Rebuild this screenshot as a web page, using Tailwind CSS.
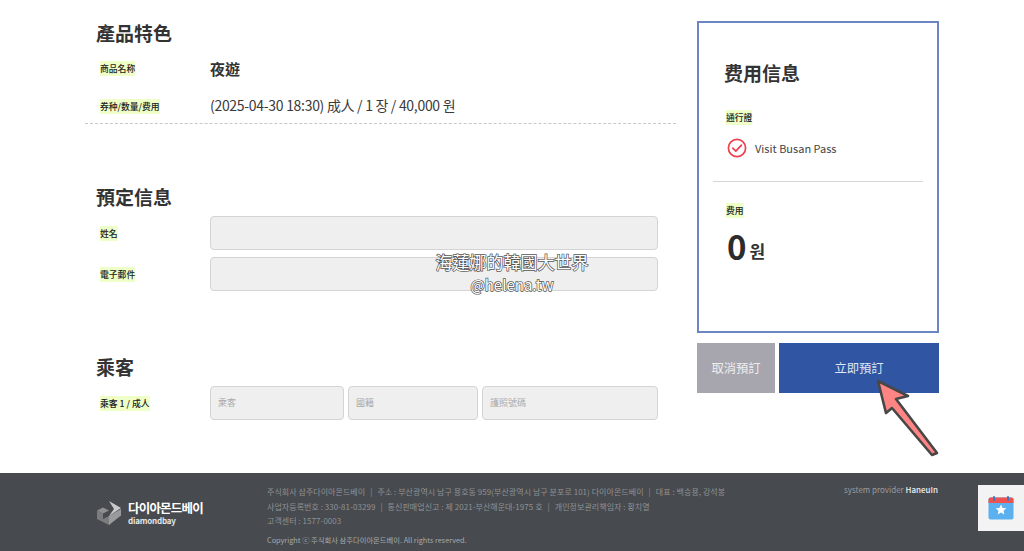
<!DOCTYPE html>
<html lang="zh-Hant">

<head>
  <meta charset="UTF-8">
  <meta name="viewport" content="width=device-width, initial-scale=1.0">
  <title>Booking</title>
  <script src="https://cdn.jsdelivr.net/npm/@tailwindcss/browser@4"></script>
</head>

<body class="relative w-[1024px] h-[551px] overflow-hidden bg-white text-[#333] font-['Noto_Sans_CJK_TC','Noto_Sans_CJK_KR',sans-serif]">
  <main class="h-[473px] flex pl-[85px] pr-[85px]">
    <!-- left column -->
    <div class="w-[591px] shrink-0 pt-[19px]">
      <section class="h-[105px] border-b border-dashed border-[#c8c8c8]">
        <h2 class="pl-[11px] text-[19px] leading-[27px] font-bold">產品特色</h2>
        <div class="flex items-center h-[28px] mt-[9px] pl-[15px]">
          <span class="w-[110px] shrink-0 -mt-[8px]"><span class="bg-[#eeffc8] text-[#222] text-[8.8px] leading-[15px] font-medium inline-block">商品名称</span></span>
          <span class="text-[15px] font-bold">夜遊</span>
        </div>
        <div class="flex items-center h-[28px] mt-[9px] pl-[15px]">
          <span class="w-[110px] shrink-0 -mt-[6px]"><span class="bg-[#eeffc8] text-[#222] text-[8.8px] leading-[15px] font-medium inline-block">券种/数量/费用</span></span>
          <span class="text-[14px] tracking-[-0.3px] text-[#3a3a3a] -mt-[1px]">(2025-04-30 18:30) 成人 / 1 장 / 40,000 원</span>
        </div>
      </section>

      <section class="mt-[59px]">
        <h2 class="pl-[11px] text-[19px] leading-[27px] font-bold">預定信息</h2>
        <div class="flex items-center mt-[6px] pl-[15px]">
          <span class="w-[110px] shrink-0 -mt-[6px]"><span class="bg-[#eeffc8] text-[#222] text-[8.8px] leading-[15px] font-medium inline-block">姓名</span></span>
          <div class="w-[448px] h-[34px] rounded-[4px] bg-[#efefef] border border-[#d4d4d4]"></div>
        </div>
        <div class="flex items-center mt-[7px] pl-[15px]">
          <span class="w-[110px] shrink-0 -mt-[6px]"><span class="bg-[#eeffc8] text-[#222] text-[8.8px] leading-[15px] font-medium inline-block">電子郵件</span></span>
          <div class="w-[448px] h-[34px] rounded-[4px] bg-[#efefef] border border-[#d4d4d4]"></div>
        </div>
      </section>

      <section class="mt-[62px]">
        <h2 class="pl-[11px] text-[19px] leading-[27px] font-bold">乘客</h2>
        <div class="flex items-center mt-[6px] pl-[15px]">
          <span class="w-[110px] shrink-0 -mt-[6px]"><span class="bg-[#eeffc8] text-[#222] text-[8.8px] leading-[15px] font-medium inline-block">乘客 1 / 成人</span></span>
          <div class="w-[448px] flex gap-[4px] text-[9px] text-[#aaa]">
            <div class="w-[134px] h-[34px] flex items-center pl-[7px] rounded-[4px] bg-[#efefef] border border-[#d4d4d4]">乘客</div>
            <div class="w-[130px] h-[34px] flex items-center pl-[7px] rounded-[4px] bg-[#efefef] border border-[#d4d4d4]">國籍</div>
            <div class="w-[176px] h-[34px] flex items-center pl-[7px] rounded-[4px] bg-[#efefef] border border-[#d4d4d4]">護照號碼</div>
          </div>
        </div>
      </section>
    </div>

    <!-- right column -->
    <aside class="w-[242px] ml-[21px] pt-[21px] shrink-0">
      <div class="h-[312px] border-2 border-[#6b86c0] px-[14px] pt-[36px]">
        <h2 class="pl-[11px] text-[19px] leading-[27px] font-bold">费用信息</h2>
        <div class="pl-[13px] mt-[16px]"><span class="bg-[#eeffc8] text-[#222] text-[8.8px] leading-[15px] font-medium inline-block">通行證</span></div>
        <div class="flex items-center gap-[8px] pl-[14px] mt-[11px] h-[22px]">
          <svg width="20" height="20" viewBox="0 0 20 20" fill="none" stroke="#ef3e4f" stroke-width="1.7" class="shrink-0">
            <circle cx="10" cy="10" r="8.6" />
            <path d="M5.8 10.2l3 3 5.6-6" stroke-linecap="round" stroke-linejoin="round" />
          </svg>
          <span class="text-[11px] text-[#444]">Visit Busan Pass</span>
        </div>
        <div class="border-t border-[#d6d6d6] mt-[22px]"></div>
        <div class="pl-[13px] mt-[13px]"><span class="bg-[#eeffc8] text-[#222] text-[8.8px] leading-[15px] font-medium inline-block">费用</span></div>
        <div class="pl-[14px] mt-[8px] flex items-baseline gap-[3px] font-bold">
          <span class="text-[33px] leading-[38px] text-[#2c2c2c]">0</span>
          <span class="text-[17px] -translate-y-[2px]">원</span>
        </div>
      </div>
      <div class="flex gap-[4px] mt-[10px] h-[50px] text-[12.3px]">
        <button class="w-[78px] bg-[#a7a5ae] text-[#eee]">取消預訂</button>
        <button class="w-[160px] bg-[#3056a3] text-[#dfe5f2]">立即預訂</button>
      </div>
    </aside>
  </main>

  <footer class="h-[78px] bg-[#474a4e] flex pl-[97px]">
    <div class="w-[170px] shrink-0 pt-[28px] flex items-start gap-[6px]">
      <svg width="25" height="24" viewBox="0 0 25 24">
        <path d="M0 9.5L6 6.5L12 9.5L6 12.5Z" fill="#8e8f90" />
        <path d="M0 9.5L6 12.5V18L12 15V24L0 18Z" fill="#7b7c7e" />
        <path d="M6 12.5L12 15L24 8V14.5L12 24V15Z" fill="#9a9b9c" />
        <path d="M12 0L24 7L12 15L17 8Z" fill="#c8c9ca" />
      </svg>
      <div class="text-white font-bold">
        <div class="text-[12.5px] leading-[14px] tracking-[-0.8px]">다이아몬드베이</div>
        <div class="text-[8px] leading-[9px] mt-[1px] tracking-[-0.2px] text-[#e6e6e6]">diamondbay</div>
      </div>
    </div>
    <div class="w-[577px] shrink-0 pt-[12px] text-[8px] leading-[14.5px] text-[#8f9194] whitespace-nowrap tracking-[0.05px]">
      <p>주식회사 삼주다이아몬드베이<span class="mx-[5px]">|</span>주소 : 부산광역시 남구 용호동 959(부산광역시 남구 분포로 101) 다이아몬드베이<span class="mx-[5px]">|</span>대표 : 백승용, 강석봉</p>
      <p>사업자등록번호 : 330-81-03299<span class="mx-[5px]">|</span>통신판매업신고 : 제 2021-부산해운대-1975 호<span class="mx-[5px]">|</span>개인정보관리책임자 : 황치열</p>
      <p>고객센터 : 1577-0003</p>
      <p class="mt-[4px] text-[7.3px] tracking-normal text-[#a8aaac]">Copyright ⓒ 주식회사 삼주다이아몬드베이. All rights reserved.</p>
    </div>
    <p class="pt-[11px] text-[8px] leading-[12px] text-[#9b9da0] whitespace-nowrap">system provider <span class="text-[#eee] font-medium">HaneuIn</span></p>
  </footer>

  <!-- calendar widget -->
  <div class="absolute left-[978px] top-[485px] w-[46px] h-[46px] bg-[#f3f3f3] flex items-center pl-[10px]">
    <svg width="26" height="24" viewBox="0 0 26 24">
      <rect x="0.5" y="1.5" width="25" height="22" rx="2" fill="#5bb1f0" />
      <path d="M0.5 7V3.5a2 2 0 0 1 2-2h21a2 2 0 0 1 2 2V7Z" fill="#ef5350" />
      <rect x="5" y="0" width="2" height="5" rx="1" fill="#3b78c4" />
      <rect x="19" y="0" width="2" height="5" rx="1" fill="#3b78c4" />
      <path d="M13 8.5l1.6 3.4 3.7.4-2.8 2.5.8 3.7-3.3-1.9-3.3 1.9.8-3.7-2.8-2.5 3.7-.4Z" fill="#fff" />
    </svg>
  </div>

  <!-- watermark -->
  <div class="absolute left-[400px] top-[250px] w-[224px] text-center text-white leading-[23px] [-webkit-text-stroke:1.4px_#555] [paint-order:stroke_fill]">
    <p class="text-[17px]">海蓮娜的韓國大世界</p>
    <p class="text-[15px]">@helena.tw</p>
  </div>

  <!-- arrow annotation -->
  <svg class="absolute left-[870px] top-[370px]" width="80" height="95" viewBox="0 0 80 95">
    <path d="M8 11L38 26L26 29L67 83L62 85L22 38L16 43Z" fill="#ff8585" stroke="#474747" stroke-width="2.6" stroke-linejoin="round" />
  </svg>
</body>

</html>
